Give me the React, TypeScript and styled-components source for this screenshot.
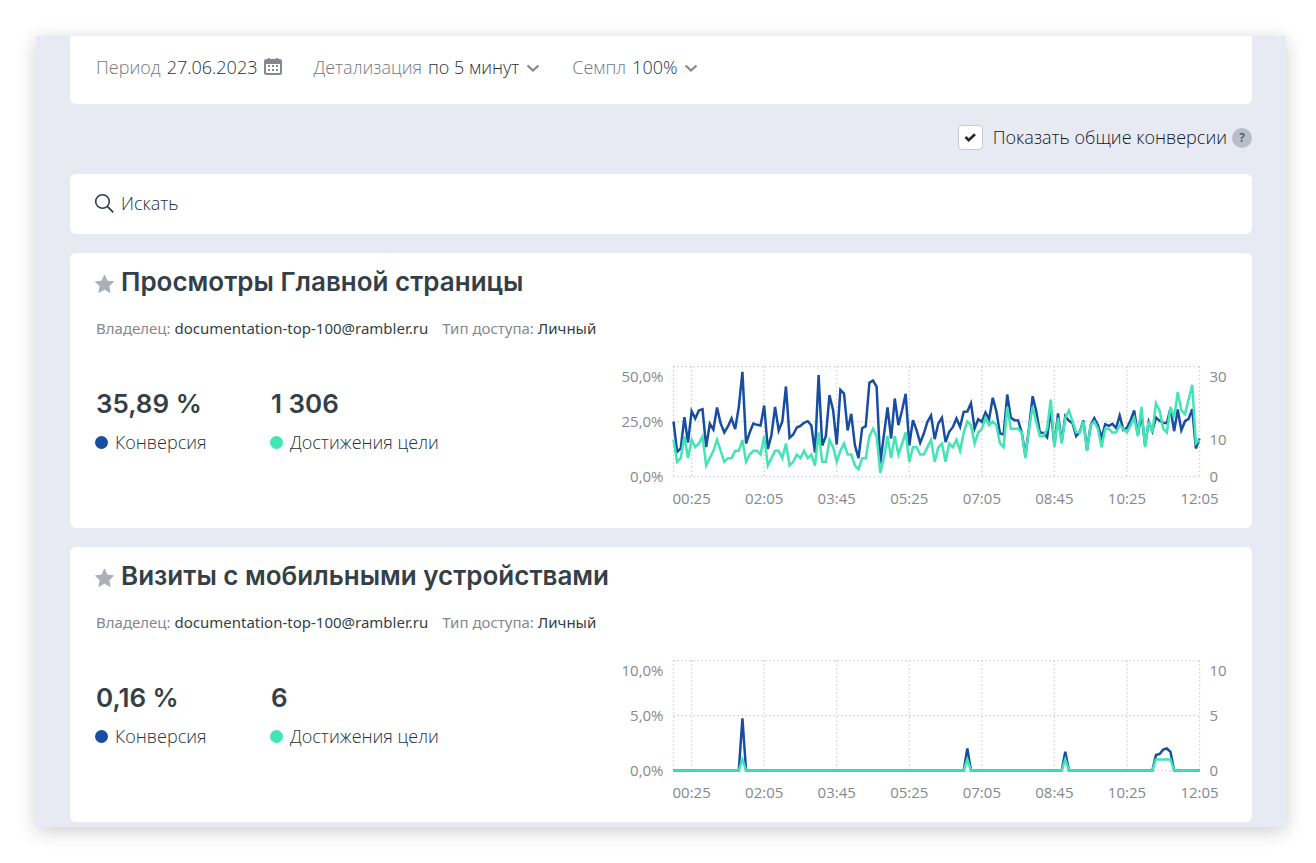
import React from "react";
import styled, { createGlobalStyle } from "styled-components";

const GlobalStyle = createGlobalStyle`
  * { box-sizing: border-box; }
  body {
    margin: 0;
    background: #fff;
    color: #26313a;
    font-family: "Open Sans", "Noto Sans", sans-serif;
    font-size: 18px;
    font-weight: 300;
  }
  button, input, select { font: inherit; color: inherit; }
`;

const Page = styled.div`
  padding: 36px 30px 36px 36px;
`;

const Frame = styled.main`
  display: flex;
  flex-direction: column;
  padding: 0 34px 5px;
  background: #e7eaf2;
  box-shadow: 0 4px 18px rgba(0, 0, 0, 0.2);
`;

const FilterBar = styled.section`
  display: flex;
  align-items: center;
  gap: 31px;
  height: 68px;
  padding: 0 26px 6px;
  background: #fff;
  border-radius: 1px 1px 6px 6px;
`;

const Filter = styled.div`
  display: flex;
  align-items: center;
  gap: 6px;
`;

const Muted = styled.label`
  color: #757880;
`;

const DateButton = styled.button`
  display: flex;
  align-items: center;
  gap: 7px;
  padding: 0;
  border: 0;
  background: none;
`;

const SelectBox = styled.span`
  display: flex;
  align-items: center;
  gap: 6px;
`;

const Select = styled.select`
  appearance: none;
  field-sizing: content;
  margin: 0;
  padding: 0;
  border: 0;
  background: none;
`;

const ToggleRow = styled.div`
  display: flex;
  align-items: center;
  justify-content: flex-end;
  gap: 5px;
  height: 70px;
  padding-bottom: 3px;
  color: #15181d;
`;

const ToggleLabel = styled.label`
  display: flex;
  align-items: center;
  gap: 10px;
  line-height: 24px;
`;

const ToggleText = styled.span`
  padding-bottom: 2px;
`;

const CheckWrap = styled.span`
  display: grid;
  place-items: center;

  & > * { grid-area: 1 / 1; }
  & > svg { pointer-events: none; }
`;

const Check = styled.input`
  appearance: none;
  width: 25px;
  height: 25px;
  margin: 0;
  border: 1px solid #c9ccd3;
  border-radius: 4px;
  background: #fff;
`;

const HelpButton = styled.button`
  display: grid;
  place-items: center;
  width: 20px;
  height: 20px;
  padding: 0;
  border: 0;
  border-radius: 50%;
  background: #b9bdc6;
  color: #4a4f58;
  font-size: 12px;
  font-weight: 600;
  line-height: 20px;
`;

const SearchBar = styled.label`
  display: flex;
  align-items: center;
  gap: 6px;
  height: 60px;
  padding: 0 24px 2px;
  background: #fff;
  border-radius: 6px;
`;

const SearchInput = styled.input`
  flex: 1;
  min-width: 0;
  padding: 0;
  border: 0;
  outline: 0;
  background: none;

  &::placeholder { color: inherit; opacity: 1; }
`;

const Card = styled.article`
  min-height: 275px;
  margin-top: 19px;
  padding: 11px 24px;
  background: #fff;
  border-radius: 6px;
`;

const TitleRow = styled.header`
  display: flex;
  align-items: center;
  gap: 6px;
`;

const StarButton = styled.button`
  display: flex;
  padding: 4px 0 0;
  border: 0;
  background: none;
`;

const Title = styled.h2`
  margin: 0;
  color: #343f48;
  font-family: Inter, "Open Sans", sans-serif;
  font-size: 26px;
  font-weight: 600;
  line-height: 36px;
`;

const Owner = styled.p`
  display: flex;
  gap: 14px;
  margin: 18px 2px 0;
  color: #343f48;
  font-family: "Noto Sans", "Open Sans", sans-serif;
  font-size: 15px;
  font-weight: 400;
  line-height: 20px;
`;

const OwnerKey = styled.span`
  color: #85888f;
`;

const CardBody = styled.div`
  display: flex;
  justify-content: space-between;
  margin-top: 24px;
`;

const Metrics = styled.dl`
  display: grid;
  grid-template-columns: 175px auto;
  align-content: start;
  margin: 24px 0 0 1px;
`;

const Metric = styled.div`
  display: flex;
  flex-direction: column-reverse;
  gap: 8px;
`;

const MetricValue = styled.dd`
  margin: 0 1px;
  color: #343f48;
  font-family: Inter, "Open Sans", sans-serif;
  font-size: 26px;
  font-weight: 600;
  line-height: 36px;
`;

const MetricName = styled.dt`
  display: flex;
  align-items: center;
  gap: 7px;
  line-height: 24px;
`;

const Dot = styled.span<{ $color: string }>`
  width: 13px;
  height: 13px;
  border-radius: 50%;
  background: ${(p) => p.$color};
`;

const ChartSvg = styled.svg`
  display: block;
  flex: none;
  width: 620px;
  height: 152px;
  overflow: visible;

  text {
    fill: #85888f;
    font-size: 15px;
    font-weight: 400;
  }
`;

const BLUE = "#174ea2";
const GREEN = "#43e4b5";

const POINTS = 146;
const PLOT = { left: 65.5, top: 4.5, width: 526, height: 110 };

// Conversion readings for each 5-minute slot, counted down from a zero mark of 364.
const readings = [
  199, 290, 280, 186, 262, 168, 190, 166, 162, 276, 206, 223, 157, 205, 232, 214, 190, 222, 155, 50,
  265, 232, 205, 209, 211, 151, 281, 240, 155, 226, 199, 94, 248, 238, 217, 212, 203, 198, 211, 292,
  60, 271, 243, 120, 165, 268, 104, 115, 226, 176, 270, 309, 219, 213, 83, 76, 95, 325, 240, 157,
  250, 130, 210, 166, 116, 271, 195, 225, 263, 235, 200, 181, 252, 205, 188, 261, 230, 216, 190, 215,
  170, 169, 144, 220, 192, 200, 172, 192, 128, 168, 235, 238, 118, 188, 195, 196, 232, 300, 220, 123,
  168, 232, 233, 246, 165, 270, 175, 260, 183, 197, 204, 243, 230, 196, 285, 210, 189, 210, 248, 207,
  212, 206, 219, 181, 224, 218, 195, 166, 240, 175, 270, 200, 228, 187, 197, 203, 204, 160, 228, 163,
  225, 198, 191, 162, 280, 250,
];
const mainConversion = readings.map((r) => (364 - r) / 6.6);

const mainGoals = [
  10, 4, 5, 11, 5, 10, 8, 9, 11, 3, 5, 7, 10, 7, 4, 5, 5, 7, 7, 10,
  4, 6, 7, 7, 6, 11, 3, 5, 7, 7, 5, 9, 3, 4, 6, 5, 7, 5, 6, 3,
  12, 4, 4, 10, 8, 4, 7, 9, 6, 6, 3, 2, 5, 5, 11, 13, 11, 1, 5, 11,
  5, 11, 6, 9, 12, 4, 8, 8, 6, 6, 8, 10, 4, 8, 9, 4, 9, 8, 10, 7,
  12, 15, 14, 9, 12, 13, 16, 14, 15, 14, 9, 8, 19, 13, 13, 13, 12, 5, 13, 19,
  15, 11, 11, 13, 21, 8, 16, 9, 16, 18, 15, 12, 12, 15, 7, 14, 15, 13, 8, 13,
  13, 12, 12, 14, 13, 12, 14, 16, 11, 19, 8, 15, 12, 20, 18, 13, 12, 19, 16, 23,
  18, 17, 21, 25, 9, 10,
];

const sparse = (values: Record<number, number>) =>
  Array.from({ length: POINTS }, (_, i) => values[i] ?? 0);

const mobileConversion = sparse({ 19: 4.75, 81: 2, 108: 1.7, 133: 1.4, 134: 1.5, 135: 1.9, 136: 2, 137: 1.7 });
const mobileGoals = sparse({ 19: 1, 81: 1, 108: 1, 133: 1, 134: 1, 135: 1, 136: 1, 137: 1 });

const times = ["00:25", "02:05", "03:45", "05:25", "07:05", "08:45", "10:25", "12:05"];

interface Tick {
  at: number;
  text: string;
}

interface Series {
  values: number[];
  max: number;
  ticks: Tick[];
}

interface Goal {
  id: string;
  title: string;
  rate: string;
  total: string;
  conversion: Series;
  goals: Series;
}

const goalList: Goal[] = [
  {
    id: "main",
    title: "Просмотры Главной страницы",
    rate: "35,89 %",
    total: "1 306",
    conversion: {
      values: mainConversion,
      max: 50,
      ticks: [{ at: 50, text: "50,0%" }, { at: 25, text: "25,0%" }, { at: 0, text: "0,0%" }],
    },
    goals: {
      values: mainGoals,
      max: 30,
      ticks: [{ at: 30, text: "30" }, { at: 10, text: "10" }, { at: 0, text: "0" }],
    },
  },
  {
    id: "mobile",
    title: "Визиты с мобильными устройствами",
    rate: "0,16 %",
    total: "6",
    conversion: {
      values: mobileConversion,
      max: 10,
      ticks: [{ at: 10, text: "10,0%" }, { at: 5, text: "5,0%" }, { at: 0, text: "0,0%" }],
    },
    goals: {
      values: mobileGoals,
      max: 10,
      ticks: [{ at: 10, text: "10" }, { at: 5, text: "5" }, { at: 0, text: "0" }],
    },
  },
];

const xAt = (i: number) => PLOT.left + (i * PLOT.width) / (POINTS - 1);
const yAt = (value: number, max: number) => PLOT.top + PLOT.height * (1 - value / max);
const toPoints = (s: Series) => s.values.map((v, i) => `${xAt(i).toFixed(2)},${yAt(v, s.max).toFixed(2)}`).join(" ");

// The topmost tick label hangs under its line so that it stays inside the plot.
const labelY = (tick: Tick, max: number) => Math.floor(yAt(tick.at, max)) + (tick.at === max ? 16 : 6);

function Chart({ conversion, goals }: { conversion: Series; goals: Series }) {
  const right = PLOT.left + PLOT.width;
  const bottom = PLOT.top + PLOT.height;
  const rows = [PLOT.top, PLOT.top + PLOT.height / 2, bottom];
  const columns = [PLOT.left, ...times.map((_, i) => xAt(5 + i * 20))];
  return (
    <ChartSvg viewBox="0 0 620 152" role="img" aria-label="График конверсии и достижений цели">
      <g stroke="#cfcfcf" strokeWidth="1.25" strokeDasharray="1.5 2.5">
        {rows.map((y) => <line key={y} x1={PLOT.left} x2={right} y1={y} y2={y} />)}
        {columns.map((x) => <line key={x} x1={x} x2={x} y1={PLOT.top} y2={bottom} />)}
      </g>
      <g fill="none" strokeWidth="2.5">
        <polyline stroke={BLUE} points={toPoints(conversion)} />
        <polyline stroke={GREEN} points={toPoints(goals)} />
      </g>
      {conversion.ticks.map((t) => (
        <text key={t.text} x={PLOT.left - 10} y={labelY(t, conversion.max)} textAnchor="end">{t.text}</text>
      ))}
      {goals.ticks.map((t) => (
        <text key={t.text} x={right + 10} y={labelY(t, goals.max)}>{t.text}</text>
      ))}
      {times.map((t, i) => (
        <text key={t} x={xAt(5 + i * 20)} y={142} textAnchor="middle">{t}</text>
      ))}
    </ChartSvg>
  );
}

const CalendarIcon = () => (
  <svg width="18" height="18" viewBox="0 0 18 18" aria-hidden="true">
    <path
      fill="#85888f"
      fillRule="evenodd"
      d="M4 1V0h2v1h6V0h2v1h1.500a2.500 2.500 0 0 1 2.500 2.500v11a2.500 2.500 0 0 1-2.500 2.500h-13A2.500 2.500 0 0 1 0 14.500v-11A2.500 2.500 0 0 1 2.500 1ZM2 6v8a1 1 0 0 0 1 1h12a1 1 0 0 0 1-1V6ZM4 7h2v2H4ZM8 7h2v2H8ZM12 7h2v2h-2ZM4 11h2v2H4ZM8 11h2v2H8ZM12 11h2v2h-2Z"
    />
  </svg>
);

const ChevronIcon = () => (
  <svg width="16" height="12" viewBox="0 0 16 12" fill="none" aria-hidden="true">
    <path d="M2.500 4.500l5.500 5 5.500-5" stroke="#85888f" strokeWidth="2.3" />
  </svg>
);

const CheckIcon = () => (
  <svg width="13" height="11" viewBox="0 0 13 11" fill="none" aria-hidden="true">
    <path d="M1.500 5l3.200 3.200L11 2.200" stroke="#24272d" strokeWidth="2.6" />
  </svg>
);

const SearchIcon = () => (
  <svg width="21" height="21" viewBox="0 0 21 21" fill="none" aria-hidden="true">
    <circle cx="8.5" cy="8.5" r="6.8" stroke="#343f48" strokeWidth="1.6" />
    <path d="M13.300 13.300l6 6" stroke="#343f48" strokeWidth="1.9" />
  </svg>
);

const StarIcon = () => (
  <svg width="21" height="20" viewBox="0 0 21 20" aria-hidden="true">
    <path
      d="M10.500 1.300l2.700 5.800 6.300.7-4.700 4.300 1.300 6.300-5.600-3.200-5.600 3.200 1.300-6.300-4.700-4.300 6.300-.7z"
      fill="#abafb9"
      stroke="#abafb9"
      strokeLinejoin="round"
    />
  </svg>
);

function GoalCard({ goal }: { goal: Goal }) {
  return (
    <Card>
      <TitleRow>
        <StarButton type="button" aria-label="В избранное"><StarIcon /></StarButton>
        <Title>{goal.title}</Title>
      </TitleRow>
      <Owner>
        <span><OwnerKey>Владелец:</OwnerKey> documentation-top-100@rambler.ru</span>
        <span><OwnerKey>Тип доступа:</OwnerKey> Личный</span>
      </Owner>
      <CardBody>
        <Metrics>
          <Metric>
            <MetricName><Dot $color={BLUE} />Конверсия</MetricName>
            <MetricValue>{goal.rate}</MetricValue>
          </Metric>
          <Metric>
            <MetricName><Dot $color={GREEN} />Достижения цели</MetricName>
            <MetricValue>{goal.total}</MetricValue>
          </Metric>
        </Metrics>
        <Chart conversion={goal.conversion} goals={goal.goals} />
      </CardBody>
    </Card>
  );
}

export default function App() {
  return (
    <Page>
      <GlobalStyle />
      <Frame>
        <FilterBar>
          <Filter>
            <Muted htmlFor="period">Период</Muted>
            <DateButton id="period" type="button">27.06.2023<CalendarIcon /></DateButton>
          </Filter>
          <Filter>
            <Muted htmlFor="detail">Детализация</Muted>
            <SelectBox>
              <Select id="detail"><option>по 5 минут</option></Select>
              <ChevronIcon />
            </SelectBox>
          </Filter>
          <Filter>
            <Muted htmlFor="sample">Семпл</Muted>
            <SelectBox>
              <Select id="sample"><option>100%</option></Select>
              <ChevronIcon />
            </SelectBox>
          </Filter>
        </FilterBar>
        <ToggleRow>
          <ToggleLabel>
            <CheckWrap>
              <Check type="checkbox" defaultChecked />
              <CheckIcon />
            </CheckWrap>
            <ToggleText>Показать общие конверсии</ToggleText>
          </ToggleLabel>
          <HelpButton type="button">?</HelpButton>
        </ToggleRow>
        <SearchBar>
          <SearchIcon />
          <SearchInput type="text" aria-label="Искать" placeholder="Искать" />
        </SearchBar>
        {goalList.map((goal) => <GoalCard key={goal.id} goal={goal} />)}
      </Frame>
    </Page>
  );
}
